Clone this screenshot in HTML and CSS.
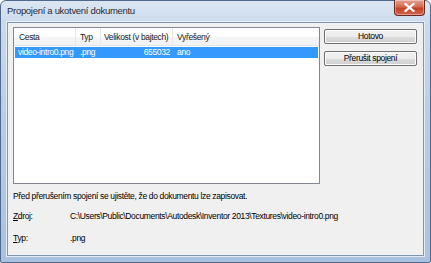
FILE: index.html
```html
<!DOCTYPE html>
<html lang="cs">
<head>
    <meta charset="UTF-8">
    <title>Propojení a ukotvení dokumentu</title>
    <link rel="stylesheet" href="styles.css">
</head>
<body>
    <div class="window">
        <div class="titlebar">
            <span class="title">Propojení a ukotvení dokumentu</span>
            <a class="close-btn" href="javascript:;">
                <svg width="11" height="9" viewBox="0 0 11 9"><path d="M1.5 1 L9.5 8 M9.5 1 L1.5 8" stroke="#fff" stroke-width="2.2" stroke-linecap="square"/></svg>
            </a>
        </div>
        <div class="client">
            <div class="top-row">
                <div class="list">
                    <div class="list-head">
                        <div class="col col-path">Cesta</div>
                        <div class="col col-type">Typ</div>
                        <div class="col col-size">Velikost (v bajtech)</div>
                        <div class="col col-res">Vyřešený</div>
                    </div>
                    <div class="list-row selected">
                        <div class="col col-path">video-intro0.png</div>
                        <div class="col col-type">.png</div>
                        <div class="col col-size num">655032</div>
                        <div class="col col-res">ano</div>
                    </div>
                </div>
                <div class="buttons">
                    <a class="btn" href="javascript:;">Hotovo</a>
                    <a class="btn" href="javascript:;">Přerušit spojení</a>
                </div>
            </div>
            <p class="note">Před přerušením spojení se ujistěte, že do dokumentu lze zapisovat.</p>
            <div class="field">
                <label><u>Z</u>droj:</label>
                <span>C:\Users\Public\Documents\Autodesk\Inventor 2013\Textures\video-intro0.png</span>
            </div>
            <div class="field">
                <label><u>T</u>yp:</label>
                <span>.png</span>
            </div>
        </div>
    </div>
</body>
</html>
```

FILE: styles.css
```css
*{
    box-sizing: border-box;
}
html,body{
    margin: 0px;
    padding: 0px;
    background: #ffffff;
}
body{
    font-family: "Liberation Sans", Arial, sans-serif;
    font-size: 8.5px;
    letter-spacing: -0.35px;
    color: #000000;
}
a{
    text-decoration: none;
    color: #000000;
}
.window{
    width: 431px;
    height: 263px;
    display: flex;
    flex-direction: column;
    border: 1px solid #4f6a8c;
    border-radius: 6px 6px 2px 2px;
    background: linear-gradient(to bottom, #dde7f3 0px, #cbdaec 22px, #b7cde6 120px, #a9c2df 100%);
    padding: 0px 6px 6px 6px;
}
.titlebar{
    height: 21px;
    display: flex;
    align-items: flex-start;
    flex-shrink: 0;
}
.title{
    font-size: 9.5px;
    letter-spacing: -0.3px;
    line-height: 14px;
    padding-top: 3px;
    color: #1e2a38;
}
.close-btn{
    margin-left: auto;
    width: 31px;
    height: 16px;
    margin-top: -1px;
    margin-right: -1px;
    display: flex;
    align-items: center;
    justify-content: center;
    border: 1px solid #6b2a20;
    border-top: none;
    border-radius: 0px 0px 4px 4px;
    background: linear-gradient(to bottom, #e4a494 0px, #d26a52 45%, #c2432a 55%, #d0664c 100%);
    box-shadow: inset 0px 0px 0px 1px rgba(255,255,255,0.35);
}
.client{
    flex: 1;
    background: #f0f0f0;
    border: 1px solid #7f96b3;
    box-shadow: 0px 0px 0px 1px #e5eef8;
    padding: 4px 6px 0px 5px;
}
.top-row{
    display: flex;
    gap: 4px;
}
.list{
    width: 307px;
    height: 157px;
    background: #ffffff;
    border: 1px solid #828790;
    padding: 0px 0px;
}
.list-head{
    display: flex;
    height: 18px;
    align-items: center;
    background: linear-gradient(to bottom, #ffffff 0%, #ffffff 50%, #f4f5f7 51%, #f2f3f5 100%);
    border-bottom: 1px solid #e3e6ea;
    margin-bottom: 1px;
}
.list-head .col{
    border-right: 1px solid #e4e7ec;
    height: 18px;
    line-height: 19px;
    color: #222222;
}
.col{
    padding: 0px 3px 0px 4px;
    white-space: nowrap;
    overflow: hidden;
}
.col-path{
    width: 62px;
    padding-left: 5px;
}
.col-type{
    width: 25px;
}
.col-size{
    width: 72px;
    padding-left: 3px;
}
.col-res{
    width: 60px;
}
.list-head .col-res{
    border-right: none;
}
.list-row{
    display: flex;
    height: 11px;
    line-height: 11px;
    margin: 0px 1px;
}
.list-row .col-path{
    width: 61px;
    padding-left: 3px;
}
.list-row.selected{
    background: #3399ff;
    color: #ffffff;
}
.num{
    text-align: right;
}
.buttons{
    display: flex;
    flex-direction: column;
    gap: 7px;
    padding-top: 2px;
}
.btn{
    display: block;
    width: 93px;
    height: 15px;
    line-height: 13px;
    text-align: center;
    border: 1px solid #707070;
    border-radius: 2px;
    background: linear-gradient(to bottom, #f2f2f2 0%, #ebebeb 50%, #dddddd 51%, #cfcfcf 100%);
    box-shadow: inset 0px 0px 0px 1px #fcfcfc;
}
.note{
    margin: 6px 0px 0px 0px;
    line-height: 12px;
}
.field{
    display: flex;
    margin-top: 8px;
    line-height: 12px;
}
.field + .field{
    margin-top: 10px;
}
.field label{
    width: 57px;
}
.field u{
    text-decoration: underline;
}
```
